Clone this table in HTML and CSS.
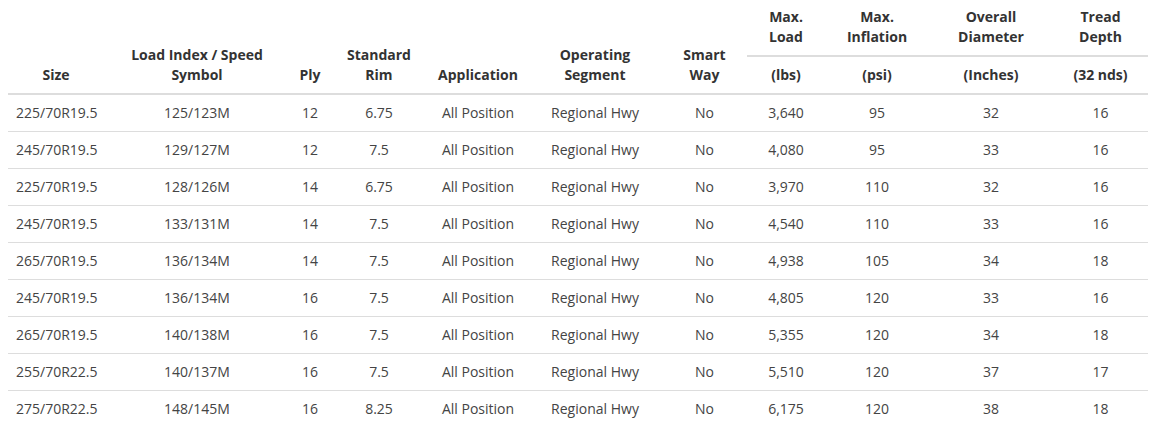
FILE: index.html
```html
<!DOCTYPE html>
<html>
<head>
<meta charset="utf-8">
<link rel="stylesheet" href="styles.css">
</head>
<body>
<table class="specs">
  <colgroup>
    <col class="c-size">
    <col class="c-load">
    <col class="c-ply">
    <col class="c-rim">
    <col class="c-app">
    <col class="c-seg">
    <col class="c-smart">
    <col class="c-maxload">
    <col class="c-infl">
    <col class="c-diam">
    <col class="c-tread">
  </colgroup>
  <thead>
    <tr class="head-top">
      <th rowspan="2">Size</th>
      <th rowspan="2">Load Index / Speed Symbol</th>
      <th rowspan="2">Ply</th>
      <th rowspan="2">Standard Rim</th>
      <th rowspan="2">Application</th>
      <th rowspan="2">Operating Segment</th>
      <th rowspan="2">Smart Way</th>
      <th>Max.<br>Load</th>
      <th>Max.<br>Inflation</th>
      <th>Overall<br>Diameter</th>
      <th>Tread<br>Depth</th>
    </tr>
    <tr>
      <th>(lbs)</th>
      <th>(psi)</th>
      <th>(Inches)</th>
      <th>(32 nds)</th>
    </tr>
  </thead>
  <tbody>
    <tr><td>225/70R19.5</td><td>125/123M</td><td>12</td><td>6.75</td><td>All Position</td><td>Regional Hwy</td><td>No</td><td>3,640</td><td>95</td><td>32</td><td>16</td></tr>
    <tr><td>245/70R19.5</td><td>129/127M</td><td>12</td><td>7.5</td><td>All Position</td><td>Regional Hwy</td><td>No</td><td>4,080</td><td>95</td><td>33</td><td>16</td></tr>
    <tr><td>225/70R19.5</td><td>128/126M</td><td>14</td><td>6.75</td><td>All Position</td><td>Regional Hwy</td><td>No</td><td>3,970</td><td>110</td><td>32</td><td>16</td></tr>
    <tr><td>245/70R19.5</td><td>133/131M</td><td>14</td><td>7.5</td><td>All Position</td><td>Regional Hwy</td><td>No</td><td>4,540</td><td>110</td><td>33</td><td>16</td></tr>
    <tr><td>265/70R19.5</td><td>136/134M</td><td>14</td><td>7.5</td><td>All Position</td><td>Regional Hwy</td><td>No</td><td>4,938</td><td>105</td><td>34</td><td>18</td></tr>
    <tr><td>245/70R19.5</td><td>136/134M</td><td>16</td><td>7.5</td><td>All Position</td><td>Regional Hwy</td><td>No</td><td>4,805</td><td>120</td><td>33</td><td>16</td></tr>
    <tr><td>265/70R19.5</td><td>140/138M</td><td>16</td><td>7.5</td><td>All Position</td><td>Regional Hwy</td><td>No</td><td>5,355</td><td>120</td><td>34</td><td>18</td></tr>
    <tr><td>255/70R22.5</td><td>140/137M</td><td>16</td><td>7.5</td><td>All Position</td><td>Regional Hwy</td><td>No</td><td>5,510</td><td>120</td><td>37</td><td>17</td></tr>
    <tr><td>275/70R22.5</td><td>148/145M</td><td>16</td><td>8.25</td><td>All Position</td><td>Regional Hwy</td><td>No</td><td>6,175</td><td>120</td><td>38</td><td>18</td></tr>
  </tbody>
</table>
</body>
</html>
```
FILE: styles.css
```css
html, body {
  margin: 0;
  padding: 0;
  background: #fff;
}
body {
  font-family: "Open Sans", "Liberation Sans", sans-serif;
  font-size: 14px;
  line-height: 20px;
  color: #444;
}
.specs {
  width: 1140px;
  margin: 0 8px;
  border-collapse: collapse;
  border-spacing: 0;
  table-layout: fixed;
}
.c-size { width: 96px; }
.c-load { width: 186px; }
.c-ply { width: 40px; }
.c-rim { width: 98px; }
.c-app { width: 100px; }
.c-seg { width: 134px; }
.c-smart { width: 85px; }
.c-maxload { width: 78px; }
.c-infl { width: 104px; }
.c-diam { width: 124px; }
.c-tread { width: 95px; }
.specs th,
.specs td {
  padding: 8px;
  text-align: center;
}
.specs th {
  font-weight: 700;
  color: #333;
  vertical-align: bottom;
  border-bottom: 2px solid #ddd;
}
.specs .head-top th {
  padding-top: 7px;
}
.specs td {
  vertical-align: top;
  border-top: 1px solid #ddd;
}
.specs tbody tr:first-child td {
  border-top: 0;
}
```
